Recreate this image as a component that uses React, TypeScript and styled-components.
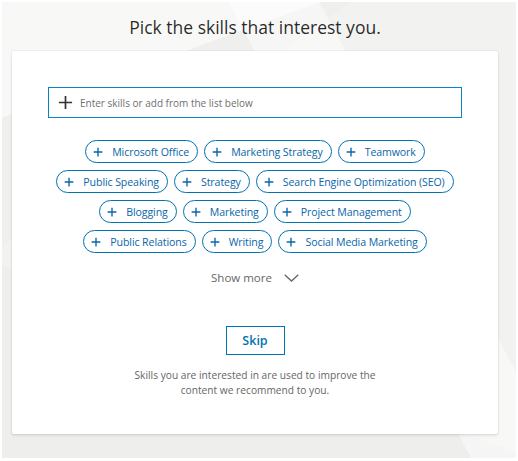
import styled, { createGlobalStyle } from "styled-components";

const GlobalStyle = createGlobalStyle`
  html, body {
    margin: 0;
    padding: 0;
    background: #ffffff;
  }
  body {
    font-family: "Open Sans", "Noto Sans", sans-serif;
  }
`;

const rows: string[][] = [
  ["Microsoft Office", "Marketing Strategy", "Teamwork"],
  ["Public Speaking", "Strategy", "Search Engine Optimization (SEO)"],
  ["Blogging", "Marketing", "Project Management"],
  ["Public Relations", "Writing", "Social Media Marketing"],
];

const PlusIcon = ({ size, stroke }: { size: number; stroke: number }) => (
  <svg width={size} height={size} viewBox="0 0 16 16" aria-hidden="true">
    <path
      d="M8 1v14M1 8h14"
      stroke="currentColor"
      strokeWidth={stroke}
      fill="none"
    />
  </svg>
);

const ChevronDown = () => (
  <svg width="15" height="8" viewBox="0 0 15 8" aria-hidden="true">
    <path d="M0.7 0.7L7.5 7L14.3 0.7" stroke="currentColor" strokeWidth="1.3" fill="none" />
  </svg>
);

const App = () => {
  return (
    <>
      <GlobalStyle />
      <Frame>
        <Page>
          <Title>Pick the skills that interest you.</Title>
          <Card>
            <SearchBox>
              <SearchIcon>
                <PlusIcon size={15} stroke={1.8} />
              </SearchIcon>
              <SearchInput placeholder="Enter skills or add from the list below" />
            </SearchBox>

            <ChipList>
              {rows.map((row, i) => (
                <ChipRow key={i}>
                  {row.map((skill) => (
                    <Chip key={skill}>
                      <PlusIcon size={10} stroke={2.2} />
                      <span>{skill}</span>
                    </Chip>
                  ))}
                </ChipRow>
              ))}
            </ChipList>

            <ShowMore>
              Show more
              <ChevronDown />
            </ShowMore>

            <SkipButton>Skip</SkipButton>

            <Note>
              Skills you are interested in are used to improve the
              <br />
              content we recommend to you.
            </Note>
          </Card>
        </Page>
      </Frame>
    </>
  );
};

const Frame = styled.div`
  padding: 2px 2px 3px 2px;
`;

const Page = styled.main`
  height: 456px;
  box-sizing: border-box;
  padding: 0 18px 0 10px;
  background-color: #f2f2f1;
  background-image:
    linear-gradient(160deg, rgba(255, 255, 255, 0.55) 0 18%, transparent 18%),
    linear-gradient(62deg, transparent 0 62%, rgba(255, 255, 255, 0.45) 62% 74%, transparent 74%),
    linear-gradient(-35deg, transparent 0 70%, rgba(0, 0, 0, 0.012) 70%),
    linear-gradient(20deg, rgba(0, 0, 0, 0.015) 0 30%, transparent 30%);
  display: flex;
  flex-direction: column;
  align-items: stretch;
`;

const Title = styled.h1`
  margin: 0;
  height: 49px;
  box-sizing: border-box;
  padding-top: 13px;
  text-align: center;
  font-size: 17.5px;
  line-height: 24px;
  font-weight: 400;
  color: rgba(0, 0, 0, 0.85);
`;

const Card = styled.section`
  height: 383px;
  box-sizing: border-box;
  background: #ffffff;
  border-radius: 2px;
  box-shadow: 0 0 0 1px rgba(0, 0, 0, 0.04), 0 2px 3px rgba(0, 0, 0, 0.08);
  padding: 36px 36px 0;
  display: flex;
  flex-direction: column;
  align-items: center;
`;

const SearchBox = styled.label`
  align-self: stretch;
  height: 31px;
  box-sizing: border-box;
  border: 1px solid #0a84c4;
  display: flex;
  align-items: center;
  gap: 7px;
  padding-left: 9px;
`;

const SearchIcon = styled.span`
  display: flex;
  color: #333333;
`;

const SearchInput = styled.input`
  flex: 1;
  border: none;
  outline: none;
  background: transparent;
  font-family: inherit;
  font-size: 10px;
  color: #333;
  padding: 0;

  &::placeholder {
    color: #6f6f6f;
  }
`;

const ChipList = styled.div`
  margin-top: 22px;
  display: flex;
  flex-direction: column;
  align-items: center;
  gap: 7px;
`;

const ChipRow = styled.div`
  display: flex;
  justify-content: center;
  gap: 6px;
`;

const Chip = styled.button`
  height: 23px;
  box-sizing: border-box;
  border: 1px solid #0073b1;
  border-radius: 12px;
  background: #ffffff;
  color: #0a66a8;
  font-family: inherit;
  font-size: 10.6px;
  letter-spacing: -0.1px;
  display: flex;
  align-items: center;
  gap: 9px;
  padding: 0 8px 0 7px;
  white-space: nowrap;
  cursor: pointer;
`;

const ShowMore = styled.button`
  margin-top: 17px;
  border: none;
  background: none;
  padding: 0;
  font-family: inherit;
  font-size: 11.5px;
  color: #666666;
  display: flex;
  align-items: center;
  gap: 12px;
  cursor: pointer;
`;

const SkipButton = styled.button`
  margin-top: 41px;
  width: 59px;
  height: 29px;
  box-sizing: border-box;
  border: 1px solid #0073b1;
  background: #ffffff;
  color: #0073b1;
  font-family: inherit;
  font-size: 12.5px;
  font-weight: 600;
  cursor: pointer;
`;

const Note = styled.p`
  margin: 13px 0 0;
  text-align: center;
  font-size: 10.2px;
  line-height: 15px;
  color: #666666;
`;

export default App;
